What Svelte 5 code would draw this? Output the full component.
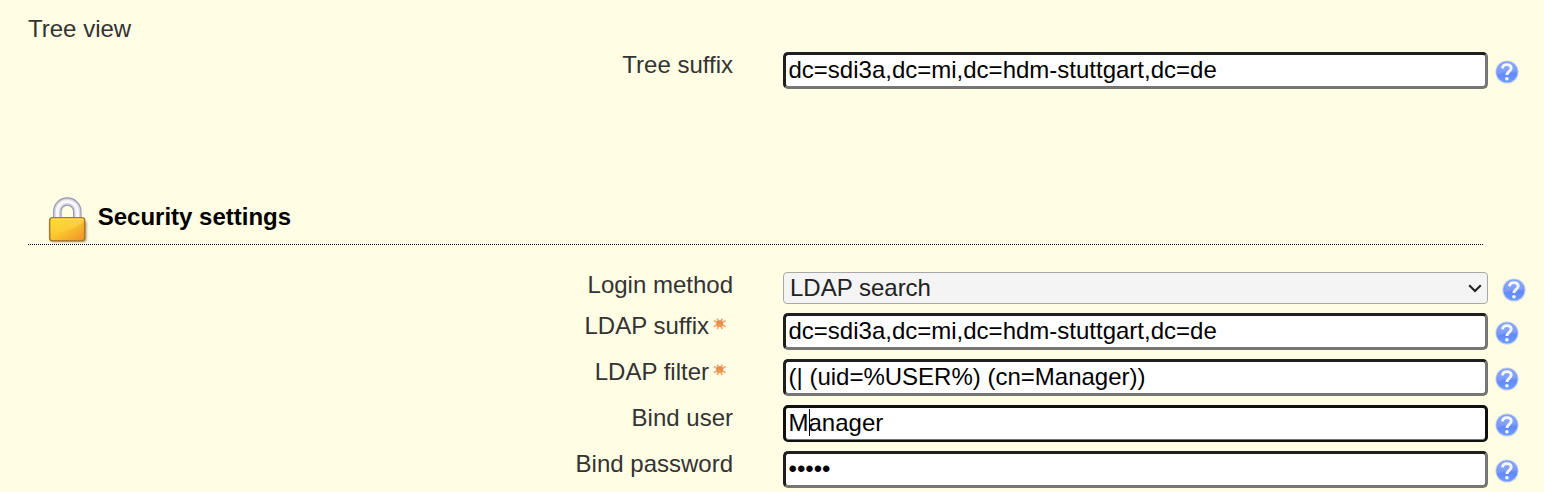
<script>
  const rows = [
    { id: 'method', label: 'Login method', kind: 'select', value: 'LDAP search' },
    { id: 'suffix', label: 'LDAP suffix', kind: 'text', value: 'dc=sdi3a,dc=mi,dc=hdm-stuttgart,dc=de', required: true },
    { id: 'filter', label: 'LDAP filter', kind: 'text', value: '(| (uid=%USER%) (cn=Manager))', required: true },
    { id: 'user', label: 'Bind user', kind: 'text', value: 'Manager', focused: true },
    { id: 'password', label: 'Bind password', kind: 'password', value: 'admin' }
  ];
  const tree = { id: 'tree', label: 'Tree suffix', kind: 'text', value: 'dc=sdi3a,dc=mi,dc=hdm-stuttgart,dc=de' };
</script>

<svg class="defs" width="0" height="0" aria-hidden="true">
  <defs>
    <linearGradient id="ball" x1="0" y1="0" x2="0" y2="1">
      <stop offset="0" stop-color="#7f9ff3" />
      <stop offset=".4" stop-color="#7093f7" />
      <stop offset=".6" stop-color="#6388fa" />
      <stop offset="1" stop-color="#6d9eff" />
    </linearGradient>
    <linearGradient id="gold" x1="0" y1="0" x2="1" y2="1">
      <stop offset="0" stop-color="#ffe02c" />
      <stop offset=".5" stop-color="#fbc42e" />
      <stop offset="1" stop-color="#ee8f26" />
    </linearGradient>
    <linearGradient id="shine" x1="0" y1="0" x2="1" y2="0">
      <stop offset="0" stop-color="#ffe640" stop-opacity=".1" />
      <stop offset="1" stop-color="#ffe870" stop-opacity=".4" />
    </linearGradient>
    <filter id="soft" x="-20%" y="-20%" width="140%" height="140%"><feGaussianBlur stdDeviation="1.1" /></filter>
    <filter id="fine" x="-20%" y="-20%" width="140%" height="140%"><feGaussianBlur stdDeviation=".5" /></filter>
  </defs>
</svg>

{#snippet field(row)}
  <div class="row">
    <label for={row.id}>
      {row.label}{#if row.required}<svg class="star" width="14" height="14" viewBox="0 0 14 14">
          <g filter="url(#fine)">
            <path d="M4.2 1.6 9.3 12M9.3 1.6 4.2 12M.8 3.7 12.7 9.6M12.7 3.7 .8 9.6" stroke="#efb287" stroke-width="2" />
            <circle cx="6.7" cy="6.6" r="3.4" fill="#e68b4e" />
            <circle cx="6.7" cy="8.2" r="1.7" fill="#f7a03a" />
          </g>
        </svg>{/if}
    </label>
    {#if row.kind === 'select'}
      <div class="select" id={row.id} role="combobox" aria-expanded="false" aria-controls={row.id} tabindex="0">
        <span>{row.value}</span>
        <svg width="14" height="9" viewBox="0 0 14 9"><path d="M1.2 1.3 7 7 12.8 1.3" fill="none" stroke="#222" stroke-width="2.1" /></svg>
      </div>
    {:else}
      <div class="box" class:focused={row.focused}>
        <input id={row.id} type={row.kind} value={row.value} />
        {#if row.focused}<i class="caret"></i>{/if}
      </div>
    {/if}
    <svg class="help" class:shifted={row.kind === 'select'} width="24" height="24" viewBox="0 0 24 24">
      <circle cx="12" cy="12" r="11.6" fill="#c3d0ef" />
      <circle cx="12" cy="12" r="10.6" fill="url(#ball)" />
      <path d="M2.2 12a9.8 9.8 0 0 1 19.6 0Q12 10.7 2.2 15Z" fill="#fff" opacity=".12" />
      <g filter="url(#fine)">
        <path d="M7.5 8.300c.5-4.800 8.700-4.800 8.700-.3 0 3.300-4.200 3.500-4.200 7" fill="none" stroke="#f4f8ff" stroke-width="2.900" />
        <circle cx="11.900" cy="18.700" r="1.800" fill="#f4f8ff" />
      </g>
    </svg>
  </div>
{/snippet}

<main>
  <div class="group">Tree view</div>
  <section class="tree">{@render field(tree)}</section>
  <h2>
    <svg width="44" height="49" viewBox="0 0 44 49">
      <rect x="5" y="25.5" width="36.5" height="21.5" rx="3" fill="#776b50" opacity=".65" filter="url(#soft)" />
      <g filter="url(#fine)">
        <path d="M12.300 26V16.500a10 10 0 0 1 20 0V26" fill="none" stroke="#9a9ab2" stroke-width="8.600" />
        <path d="M12.300 26V16.500a10 10 0 0 1 20 0V26" fill="none" stroke="#d6d6e2" stroke-width="6.200" />
        <path d="M12.300 26V16.500a10 10 0 0 1 20 0V26" fill="none" stroke="#f8f8fc" stroke-width="3.200" />
      </g>
      <rect x="4.700" y="22.700" width="35" height="23" rx="2.800" fill="url(#gold)" stroke="#ad782c" stroke-width="1.500" />
      <path d="M5.500 24h33.500v2Q29 36 5.500 39Z" fill="url(#shine)" />
      <path d="M6.500 24h31.500" stroke="#ffe76a" stroke-width="1" />
    </svg>
    <span>Security settings</span>
  </h2>
  <section>
    {#each rows as row (row.id)}{@render field(row)}{/each}
  </section>
</main>

<style>
  :global(body) { background: #fffde3; overflow: hidden; }
  .defs { position: absolute; }
  main {
    box-sizing: border-box;
    height: 492px;
    padding: 15px 0 0 28px;
    overflow: hidden;
    font: 24px/28px "Liberation Sans", Arial, sans-serif;
    color: #333;
  }
  .group { height: 36px; }
  .tree { height: 141px; }
  h2 {
    box-sizing: border-box;
    display: flex;
    width: 1455px;
    height: 53px;
    margin: 0 0 26px;
    padding: 3px 0 0 17px;
    border-bottom: 1px dotted #000;
    font-size: 24px;
    color: #000;
  }
  h2 svg { flex: none; }
  h2 span { margin: 8px 0 0 8.7px; }
  .row { display: flex; align-items: flex-start; height: 46px; }
  .row:has(.select) { height: 41px; }
  label { width: 705px; text-align: right; white-space: nowrap; }
  .star { margin: 0 6px 3px 4px; vertical-align: baseline; }
  .box, .select {
    position: relative;
    box-sizing: border-box;
    flex: none;
    width: 705px;
    margin: 1px 0 0 50px;
  }
  .box {
    height: 37px;
    border: 3px solid;
    border-color: #1f1f1f #767676 #767676 #1f1f1f;
    border-radius: 5px;
    background: #fff;
  }
  .box.focused { border-color: #101010; }
  .focused::after {
    content: "";
    position: absolute;
    inset: 0 0 -1px 0;
    border: solid #767676;
    border-width: 0 0 1px 0;
    border-radius: 2px;
  }
  input {
    display: block;
    box-sizing: border-box;
    width: 100%;
    height: 29px;
    padding: 0 3px 0 2.5px;
    border: 0;
    outline: 0;
    background: transparent;
    font: inherit;
    color: #000;
  }
  .caret { position: absolute; left: 23px; top: 1px; width: 1px; height: 27px; background: #000; }
  .select {
    display: flex;
    align-items: center;
    justify-content: space-between;
    height: 32px;
    padding: 0 5px 0 6px;
    border: 1px solid #a8a8a8;
    border-radius: 4px;
    background: #f4f4f4;
    color: #222;
  }
  .help { flex: none; margin: 9px 0 0 7px; }
  .help.shifted { margin: 7px 0 0 14px; }
</style>
